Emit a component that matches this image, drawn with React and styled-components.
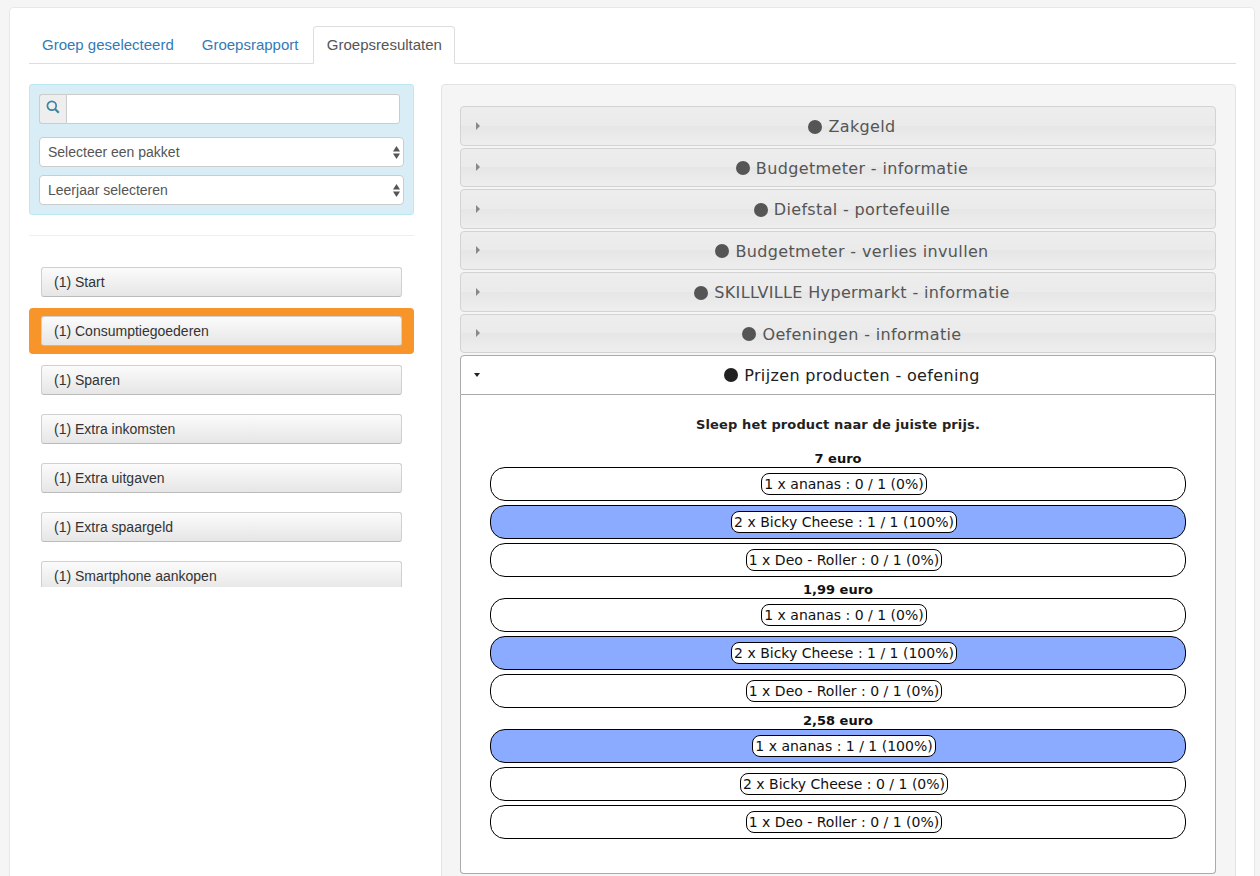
import React from 'react';
import styled, { createGlobalStyle } from 'styled-components';

const GlobalStyle = createGlobalStyle`
  * { box-sizing: border-box; }
  html, body {
    margin: 0;
    height: 876px;
    overflow: hidden;
    background: #f5f5f5;
    font-family: "Liberation Sans", Arial, sans-serif;
    font-size: 14px;
    color: #333;
  }
`;

const Page = styled.div`
  padding: 7px 5px 0 9px;
`;

const Card = styled.main`
  background: #fff;
  border: 1px solid #e8e8e8;
  border-radius: 4px;
  padding: 18px 18px 20px 19px;
`;

const Tabs = styled.nav`
  display: flex;
  height: 38px;
  border-bottom: 1px solid #ddd;
  margin-bottom: 20px;
`;

const Tab = styled.a`
  height: 38px;
  padding: 0 ${p => (p.$active ? '12.5px' : '13px')} 0 13px;
  margin-left: ${p => (p.$first ? '-1px' : p.$active ? '0.4px' : '0')};
  line-height: 36px;
  font-size: 15px;
  color: ${p => (p.$active ? '#555' : '#337ab7')};
  background: ${p => (p.$active ? '#fff' : 'transparent')};
  border: 1px solid ${p => (p.$active ? '#ddd' : 'transparent')};
  border-bottom-color: ${p => (p.$active ? '#fff' : 'transparent')};
  border-radius: 4px 4px 0 0;
`;

const Columns = styled.div`
  display: grid;
  grid-template-columns: 385px 795px;
  column-gap: 27px;
  align-items: start;
`;

const Sidebar = styled.aside`
  display: flex;
  flex-direction: column;
`;

const FilterBox = styled.div`
  display: flex;
  flex-direction: column;
  height: 131px;
  padding: 9px 9px 0;
  background: #d9edf7;
  border: 1px solid #bce8f1;
  border-radius: 3px;
`;

const SearchGroup = styled.div`
  display: flex;
  width: 361px;
  height: 30px;
  margin-bottom: 13px;
`;

const SearchAddon = styled.span`
  display: flex;
  align-items: center;
  justify-content: center;
  width: 27px;
  padding-bottom: 4px;
  background: #eee;
  border: 1px solid #ccc;
  border-right: 0;
  border-radius: 3px 0 0 3px;
`;

const SearchInput = styled.input`
  flex: 1;
  min-width: 0;
  background: #fff;
  border: 1px solid #ccc;
  border-radius: 0 3px 3px 0;
  outline: 0;
`;

const SelectWrap = styled.div`
  position: relative;
  height: 30px;
  margin-bottom: 8px;
`;

const Select = styled.select`
  appearance: none;
  display: block;
  width: 100%;
  height: 30px;
  padding: 0 8px;
  font-family: "Liberation Sans", Arial, sans-serif;
  font-size: 14px;
  color: #555;
  background: #fff;
  border: 1px solid #ccc;
  border-radius: 4px;
`;

const SelectArrows = styled.svg`
  position: absolute;
  top: 9px;
  right: 4px;
  width: 7px;
  height: 13px;
  pointer-events: none;
`;

const Divider = styled.hr`
  width: 100%;
  height: 1px;
  margin: 20px 0 12px;
  border: 0;
  background: #eee;
`;

const ModuleList = styled.div`
  display: flex;
  flex-direction: column;
  height: 339px;
  overflow: hidden;
  padding-top: 11px;
`;

const ModuleSlot = styled.div`
  flex: none;
  display: flex;
  align-items: center;
  height: 46px;
  margin-bottom: 3px;
  padding: 0 12px;
  background: ${p => (p.$selected ? '#f7952b' : 'transparent')};
  border-radius: 4px;
`;

const ModuleButton = styled.button`
  width: 100%;
  height: 30px;
  padding: 0 12px;
  text-align: left;
  font-family: "Liberation Sans", Arial, sans-serif;
  font-size: 14px;
  color: #333;
  background: linear-gradient(#fbfbfb, #e6e6e6);
  border: 1px solid #d0d0d0;
  border-bottom-color: #bbb;
  border-radius: 3px;
`;

const ResultsWell = styled.section`
  min-height: 900px;
  padding: 21px 19px 21px 18px;
  background: #f5f5f5;
  border: 1px solid #e3e3e3;
  border-radius: 4px;
`;

const AccordionHeader = styled.h3`
  position: relative;
  display: flex;
  align-items: center;
  justify-content: center;
  height: ${p => (p.$open ? '40px' : '39.5px')};
  margin: 0 0 ${p => (p.$open ? '0' : '2px')};
  padding: ${p => (p.$open ? '0' : '1.5px')} 0 0 28px;
  font-family: "DejaVu Sans", Verdana, sans-serif;
  font-size: 16px;
  font-weight: 400;
  letter-spacing: 0.35px;
  color: ${p => (p.$open ? '#212121' : '#555')};
  background: ${p => (p.$open ? '#fff' : 'linear-gradient(#ededed 0, #ebebeb 50%, #e6e6e6 50%, #eeeeee 100%)')};
  border: 1px solid ${p => (p.$open ? '#aaa' : '#d3d3d3')};
  border-radius: ${p => (p.$open ? '4px 4px 0 0' : '4px')};
`;

const Caret = styled.span`
  position: absolute;
  left: ${p => (p.$open ? '13px' : '15px')};
  top: 50%;
  width: 0;
  height: 0;
  transform: translateY(-50%);
  border-style: solid;
  ${p => (p.$open
    ? 'border-width: 4px 3.5px 0; border-color: #222 transparent transparent;'
    : 'border-width: 4px 0 4px 4px; border-color: transparent transparent transparent #888;')}
`;

const Dot = styled.span`
  width: 14px;
  height: 14px;
  margin-right: 6px;
  border-radius: 50%;
  background: currentColor;
`;

const AccordionBody = styled.div`
  height: 479px;
  padding: 20px 29px 0;
  font-family: "DejaVu Sans", Verdana, sans-serif;
  font-size: 13px;
  color: #222;
  background: #fff;
  border: 1px solid #aaa;
  border-top: 0;
  border-radius: 0 0 4px 4px;
`;

const Instruction = styled.p`
  margin: 1px 0 17px;
  line-height: 18px;
  font-weight: 700;
  letter-spacing: 0.13px;
  text-align: center;
`;

const PriceGroup = styled.div`
  padding-bottom: 1px;
`;

const PriceLabel = styled.div`
  height: 16px;
  line-height: 16px;
  font-weight: 700;
  text-align: center;
  color: #111;
`;

const DropRow = styled.div`
  display: flex;
  align-items: center;
  justify-content: center;
  height: 34px;
  margin-bottom: 4px;
  padding-left: 12px;
  background: ${p => (p.$correct ? '#8aabff' : '#fff')};
  border: 1px solid #000;
  border-radius: 15px;
`;

const ProductChip = styled.span`
  padding: 2px;
  line-height: 16px;
  font-size: 14px;
  color: #111;
  background: #fff;
  border: 1px solid #000;
  border-radius: 8px;
  white-space: nowrap;
`;

const modules = ['Start', 'Consumptiegoederen', 'Sparen', 'Extra inkomsten', 'Extra uitgaven', 'Extra spaargeld', 'Smartphone aankopen'];

const sections = ['Zakgeld', 'Budgetmeter - informatie', 'Diefstal - portefeuille', 'Budgetmeter - verlies invullen', 'SKILLVILLE Hypermarkt - informatie', 'Oefeningen - informatie'];

const prices = [
  { label: '7 euro', rows: [['1 x ananas : 0 / 1 (0%)'], ['2 x Bicky Cheese : 1 / 1 (100%)', true], ['1 x Deo - Roller : 0 / 1 (0%)']] },
  { label: '1,99 euro', rows: [['1 x ananas : 0 / 1 (0%)'], ['2 x Bicky Cheese : 1 / 1 (100%)', true], ['1 x Deo - Roller : 0 / 1 (0%)']] },
  { label: '2,58 euro', rows: [['1 x ananas : 1 / 1 (100%)', true], ['2 x Bicky Cheese : 0 / 1 (0%)'], ['1 x Deo - Roller : 0 / 1 (0%)']] },
];

const SearchIcon = () => (
  <svg width="14" height="14" viewBox="0 0 14 14" fill="none" stroke="#3a85a6">
    <circle cx="5.8" cy="5.8" r="4.4" strokeWidth="1.7" />
    <path d="M9 9l3.8 3.8" strokeWidth="2.2" />
  </svg>
);

const Arrows = () => (
  <SelectArrows viewBox="0 0 7 13" fill="#555">
    <path d="M3.5 0L7 5.5H0z" />
    <path d="M3.5 13L0 7.5h7z" />
  </SelectArrows>
);

export default function App() {
  return (
    <Page>
      <GlobalStyle />
      <Card>
        <Tabs>
          <Tab $first>Groep geselecteerd</Tab>
          <Tab>Groepsrapport</Tab>
          <Tab $active>Groepsresultaten</Tab>
        </Tabs>
        <Columns>
          <Sidebar>
            <FilterBox>
              <SearchGroup>
                <SearchAddon><SearchIcon /></SearchAddon>
                <SearchInput />
              </SearchGroup>
              <SelectWrap>
                <Select><option>Selecteer een pakket</option></Select>
                <Arrows />
              </SelectWrap>
              <SelectWrap>
                <Select><option>Leerjaar selecteren</option></Select>
                <Arrows />
              </SelectWrap>
            </FilterBox>
            <Divider />
            <ModuleList>
              {modules.map((name, i) => (
                <ModuleSlot key={name} $selected={i === 1}>
                  <ModuleButton>(1) {name}</ModuleButton>
                </ModuleSlot>
              ))}
            </ModuleList>
          </Sidebar>
          <ResultsWell>
            {sections.map(name => (
              <AccordionHeader key={name}>
                <Caret />
                <Dot />
                {name}
              </AccordionHeader>
            ))}
            <AccordionHeader $open>
              <Caret $open />
              <Dot />
              Prijzen producten - oefening
            </AccordionHeader>
            <AccordionBody>
              <Instruction>Sleep het product naar de juiste prijs.</Instruction>
              {prices.map(group => (
                <PriceGroup key={group.label}>
                  <PriceLabel>{group.label}</PriceLabel>
                  {group.rows.map(([text, correct]) => (
                    <DropRow key={text} $correct={correct}>
                      <ProductChip>{text}</ProductChip>
                    </DropRow>
                  ))}
                </PriceGroup>
              ))}
            </AccordionBody>
          </ResultsWell>
        </Columns>
      </Card>
    </Page>
  );
}
